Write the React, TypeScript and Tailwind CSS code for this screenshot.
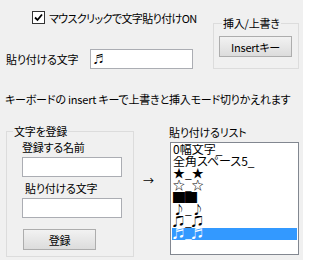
import React from 'react';

const font = "font-['Noto_Sans_CJK_JP','Noto_Sans',sans-serif] [font-feature-settings:'palt']";

const listItems = [
  '0幅文字_',
  '全角スペース5_',
  '★_★',
  '☆_☆',
  '██',
  '♪_♪',
  '♫_♫',
  '♬_♬',
];

const WinButton = ({ label, className }: { label: string; className: string }) => (
  <button
    type="button"
    className={`flex items-center justify-center border border-[#adadad] bg-gradient-to-b from-[#f2f2f2] to-[#dcdcdc] leading-[14px] ${className}`}
  >
    {label}
  </button>
);

const TextBox = ({ value, className }: { value?: string; className: string }) => (
  <div className={`flex items-center border border-[#abadb3] bg-white pl-[3px] ${className}`}>
    {value && <span className="text-[10px] leading-[10px]">{value}</span>}
  </div>
);

const App = () => {
  return (
    <div className={`h-[260px] w-[303px] overflow-hidden whitespace-nowrap bg-[#f0f0f0] text-[11px] tracking-[-0.2px] text-black ${font}`}>
      {/* top row */}
      <div className="flex">
        <div className="w-[210px]">
          <label className="ml-[32px] mt-[11px] flex h-[13px] items-center gap-[4px]">
            <span className="flex h-[13px] w-[13px] shrink-0 items-center justify-center border border-[#333333] bg-white">
              <svg width="9" height="9" viewBox="0 0 9 9">
                <path d="M1 4.5 L3.5 7 L8 1.5" fill="none" stroke="#000" strokeWidth="1.8" />
              </svg>
            </span>
            <span className="leading-[14px] tracking-[-0.6px]">マウスクリックで文字貼り付けON</span>
          </label>
          <div className="mt-[25px] flex items-center">
            <span className="ml-[6px] w-[84px] leading-[14px]">貼り付ける文字</span>
            <TextBox value="♬" className="h-[20px] w-[103px]" />
          </div>
        </div>
        <fieldset className="ml-[3px] mt-[16px] w-[86px] border border-[#dcdcdc] px-[5px] pb-[5px]">
          <legend className="ml-[3px] px-[1px] leading-[14px]">挿入/上書き</legend>
          <WinButton label="Insertキー" className="mt-[6px] h-[21px] w-[73px]" />
        </fieldset>
      </div>

      <p className="ml-[5px] mt-[23px] leading-[14px]">
        キーボードの insert キーで上書きと挿入モード切りかえれます
      </p>

      {/* bottom row */}
      <div className="flex">
        <fieldset className="ml-[6px] mt-[18px] w-[128px] border border-[#dcdcdc] pb-[6px]">
          <legend className="ml-[6px] px-[1px] leading-[14px]">文字を登録</legend>
          <div className="ml-[15px] mt-[2px] leading-[14px]">登録する名前</div>
          <TextBox className="ml-[15px] mt-[3px] h-[20px] w-[100px]" />
          <div className="ml-[18px] mt-[4px] leading-[14px]">貼り付ける文字</div>
          <TextBox className="ml-[15px] mt-[3px] h-[20px] w-[100px]" />
          <WinButton label="登録" className="ml-[16px] mt-[11px] h-[21px] w-[73px]" />
        </fieldset>

        <div className="ml-[9px] mt-[67px] w-[26px] leading-[14px]">→</div>

        <div className="mt-[19px]">
          <div className="leading-[14px]">貼り付けるリスト</div>
          <div className="ml-[1px] mt-[3px] h-[113px] w-[129px] border border-[#828790] bg-white p-[1px] tracking-normal">
            {listItems.map((item, i) => (
              <div
                key={item}
                className={`h-[12px] overflow-hidden pl-[1px] text-[12px] leading-[10px] ${
                  i === listItems.length - 1 ? 'bg-[#3399ff] text-white' : ''
                }`}
              >
                {item}
              </div>
            ))}
          </div>
        </div>
      </div>
    </div>
  );
};

export default App;
